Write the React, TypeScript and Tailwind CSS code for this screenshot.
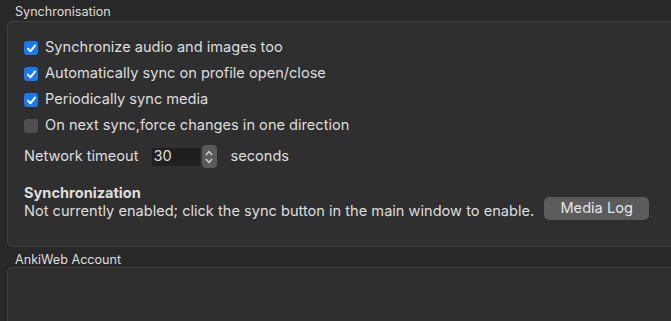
import React from "react";

function Check({ checked }: { checked: boolean }) {
  return checked ? (
    <div className="w-[14px] h-[14px] rounded-[3px] bg-[#1a78f2] flex items-center justify-center shrink-0">
      <svg width="11" height="11" viewBox="0 0 11 11">
        <path d="M2 5.8 L4.4 8.3 L9 2.6" fill="none" stroke="white" strokeWidth="2" strokeLinecap="round" strokeLinejoin="round" />
      </svg>
    </div>
  ) : (
    <div className="w-[14px] h-[14px] rounded-[3px] bg-[#4f4f4f] shrink-0" />
  );
}

function Row({ checked, label }: { checked: boolean; label: string }) {
  return (
    <div className="flex items-center gap-[7px] h-[26px]">
      <Check checked={checked} />
      <span>{label}</span>
    </div>
  );
}

export default function App() {
  return (
    <div
      className="w-[671px] h-[321px] bg-[#282828] text-[#dedede] overflow-hidden text-[14.6px]"
      style={{ fontFamily: 'Inter, "Liberation Sans", Arial, sans-serif' }}
    >
      <div className="pl-[15px] pt-[3px] text-[12.6px] h-[21px]">Synchronisation</div>
      <div className="ml-[7px] -mr-[10px] h-[226px] bg-[#2f2f2f] border border-[#3d3d3d] rounded-[5px] pl-[16px] pt-[13px]">
        <Row checked label="Synchronize audio and images too" />
        <Row checked label="Automatically sync on profile open/close" />
        <Row checked label="Periodically sync media" />
        <Row checked={false} label="On next sync,force changes in one direction" />
        <div className="flex items-center h-[23px] mt-[6px]">
          <span>Network timeout</span>
          <div className="ml-[13px] w-[48px] h-[18px] bg-[#1f1f1f] flex items-center pl-[2px]">30</div>
          <div className="ml-[2px] w-[15px] h-[23px] rounded-[4px] bg-[#5a5a5a] flex flex-col items-center justify-center gap-[2px]">
            <svg width="8" height="6" viewBox="0 0 8 6"><path d="M1 5 L4 1.5 L7 5" fill="none" stroke="#d8d8d8" strokeWidth="1.3" /></svg>
            <svg width="8" height="6" viewBox="0 0 8 6"><path d="M1 1 L4 4.5 L7 1" fill="none" stroke="#d8d8d8" strokeWidth="1.3" /></svg>
          </div>
          <span className="ml-[14px]">seconds</span>
        </div>
        <div className="flex items-end mt-[16px]">
          <div className="leading-[18px]">
            <div className="font-bold">Synchronization</div>
            <div>Not currently enabled; click the sync button in the main window to enable.</div>
          </div>
          <div className="ml-[10px] w-[105px] h-[23px] rounded-[5px] bg-[#5b5b5b] flex items-center justify-center text-[#e6e6e6]">
            Media Log
          </div>
        </div>
      </div>
      <div className="pl-[15px] pt-[4px] text-[12.6px] h-[20px]">AnkiWeb Account</div>
      <div className="ml-[7px] -mr-[10px] h-[60px] bg-[#2f2f2f] border border-[#3d3d3d] rounded-[5px]" />
    </div>
  );
}
